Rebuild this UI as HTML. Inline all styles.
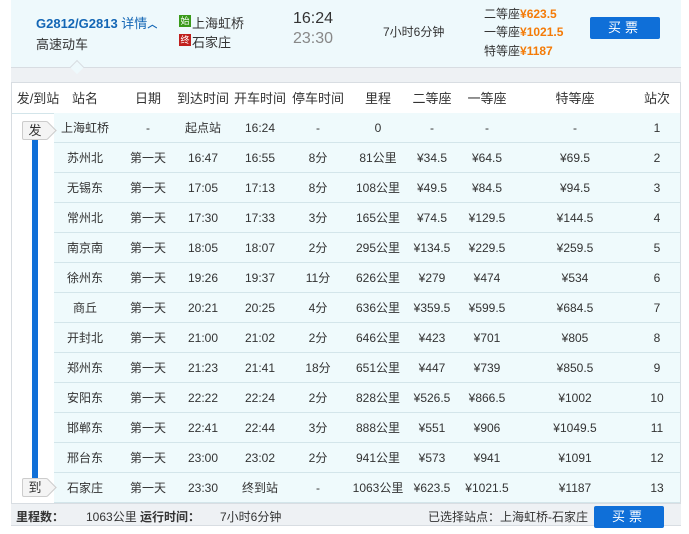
<!DOCTYPE html><html><head><meta charset="utf-8"><style>
*{margin:0;padding:0;box-sizing:border-box}
body{width:689px;height:534px;background:#fff;font-family:"Liberation Sans","Noto Sans CJK SC",sans-serif;font-size:12px;color:#333;position:relative;overflow:hidden}
.top{position:absolute;left:11px;top:0;width:670px;height:67px;background:#eef9fc}
.a{position:absolute;white-space:nowrap}
.panel{position:absolute;left:11px;top:67px;width:670px;height:459px;border:1px solid #d8dde2;border-top:none}
.gray{position:absolute;left:11px;top:67px;width:670px;height:16px;background:#eef1f4;border-top:1px solid #d8dde2;border-bottom:1px solid #d8dde2}
.row{position:absolute;left:54px;width:626px;height:30px;background:#effafc;border-bottom:1px solid #d3e5ea}
.c{position:absolute;text-align:center;line-height:30px;white-space:nowrap}
.foot{position:absolute;left:11px;top:503px;width:670px;height:23px;background:#eef1f4;border-top:1px solid #d8dde2;border-bottom:1px solid #d8dde2}
.btn{position:absolute;background:#0f6fd8;color:#fff;text-align:center;border-radius:2px;letter-spacing:4px;font-size:13px}
.tag{position:absolute;left:22px;width:26px;height:19px;background:#f4f4f4;border:1px solid #ccc;border-radius:2px;font-size:13px;text-align:center;line-height:17px}
.tag:after{content:"";position:absolute;right:-7px;top:2px;width:12px;height:12px;background:#f4f4f4;border-right:1px solid #ccc;border-top:1px solid #ccc;transform:rotate(45deg)}
.o{color:#f47b07;font-weight:bold}
</style></head><body>
<div class="top"></div>
<div class="a" style="left:36px;top:13px;color:#1366b5;font-weight:bold;font-size:13px">G2812/G2813 <span style="font-weight:normal">详情</span><span style="font-size:10px">︿</span></div>
<div class="a" style="left:36px;top:34px;font-size:13px">高速动车</div>
<div class="a" style="left:179px;top:15px;width:12px;height:12px;background:#3a9a1a;color:#fff;font-size:9px;line-height:12px;text-align:center">始</div>
<div class="a" style="left:192px;top:13px;font-size:13px">上海虹桥</div>
<div class="a" style="left:179px;top:34px;width:12px;height:12px;background:#c0201d;color:#fff;font-size:9px;line-height:12px;text-align:center">终</div>
<div class="a" style="left:192px;top:32px;font-size:13px">石家庄</div>
<div class="a" style="left:293px;top:10px;font-size:16px;color:#333">16:24</div>
<div class="a" style="left:293px;top:30px;font-size:16px;color:#888">23:30</div>
<div class="a" style="left:383px;top:23px;font-size:12px">7小时6分钟</div>
<div class="a" style="left:484px;top:5px;font-size:12px">二等座<span class="o">¥623.5</span></div>
<div class="a" style="left:484px;top:23px;font-size:12px">一等座<span class="o">¥1021.5</span></div>
<div class="a" style="left:484px;top:42px;font-size:12px">特等座<span class="o">¥1187</span></div>
<div class="btn" style="left:590px;top:17px;width:70px;height:22px;line-height:22px">买票</div>
<div class="panel"></div>
<div class="gray"></div>
<div style="position:absolute;left:72px;top:62px;width:10px;height:10px;background:#eef9fc;border-right:1px solid #d8dde2;border-bottom:1px solid #d8dde2;transform:rotate(225deg)"></div>
<div style="position:absolute;left:12px;top:113px;width:668px;border-top:1px solid #d3e5ea"></div>
<div id="hdr"></div>
<div style="position:absolute;left:32px;top:139px;width:6px;height:340px;background:#0f6fd8"></div>
<div id="rows"></div>
<div class="foot"></div>
<div class="a" style="left:16px;top:508px;font-weight:bold">里程数：</div>
<div class="a" style="left:86px;top:508px">1063公里 <b>运行时间：</b></div>
<div class="a" style="left:220px;top:508px">7小时6分钟</div>
<div class="a" style="left:428px;top:508px">已选择站点：上海虹桥-石家庄</div>
<div class="btn" style="left:594px;top:506px;width:70px;height:22px;line-height:22px">买票</div>
<script>
var cx=[38,85,148,203,260,318,378,432,487,575,657];
var h=["发/到站","站名","日期","到达时间","开车时间","停车时间","里程","二等座","一等座","特等座","站次"];
var s="";h.forEach(function(t,i){s+='<div class="c" style="left:'+(cx[i]-40)+'px;width:80px;top:84px;font-size:13px">'+t+'</div>'});
document.getElementById("hdr").outerHTML=s;
var d=[["上海虹桥","-","起点站","16:24","-","0","-","-","-","1"],
["苏州北","第一天","16:47","16:55","8分","81公里","¥34.5","¥64.5","¥69.5","2"],
["无锡东","第一天","17:05","17:13","8分","108公里","¥49.5","¥84.5","¥94.5","3"],
["常州北","第一天","17:30","17:33","3分","165公里","¥74.5","¥129.5","¥144.5","4"],
["南京南","第一天","18:05","18:07","2分","295公里","¥134.5","¥229.5","¥259.5","5"],
["徐州东","第一天","19:26","19:37","11分","626公里","¥279","¥474","¥534","6"],
["商丘","第一天","20:21","20:25","4分","636公里","¥359.5","¥599.5","¥684.5","7"],
["开封北","第一天","21:00","21:02","2分","646公里","¥423","¥701","¥805","8"],
["郑州东","第一天","21:23","21:41","18分","651公里","¥447","¥739","¥850.5","9"],
["安阳东","第一天","22:22","22:24","2分","828公里","¥526.5","¥866.5","¥1002","10"],
["邯郸东","第一天","22:41","22:44","3分","888公里","¥551","¥906","¥1049.5","11"],
["邢台东","第一天","23:00","23:02","2分","941公里","¥573","¥941","¥1091","12"],
["石家庄","第一天","23:30","终到站","-","1063公里","¥623.5","¥1021.5","¥1187","13"]];
s="";d.forEach(function(r,k){var y=113+k*30;s+='<div class="row" style="top:'+y+'px"></div>';
r.forEach(function(t,i){s+='<div class="c" style="left:'+(cx[i+1]-40)+'px;width:80px;top:'+y+'px">'+t+'</div>'})});
s+='<div class="tag" style="top:121px">发</div><div class="tag" style="top:478px">到</div>';
document.getElementById("rows").outerHTML=s;
</script>
</body></html>
